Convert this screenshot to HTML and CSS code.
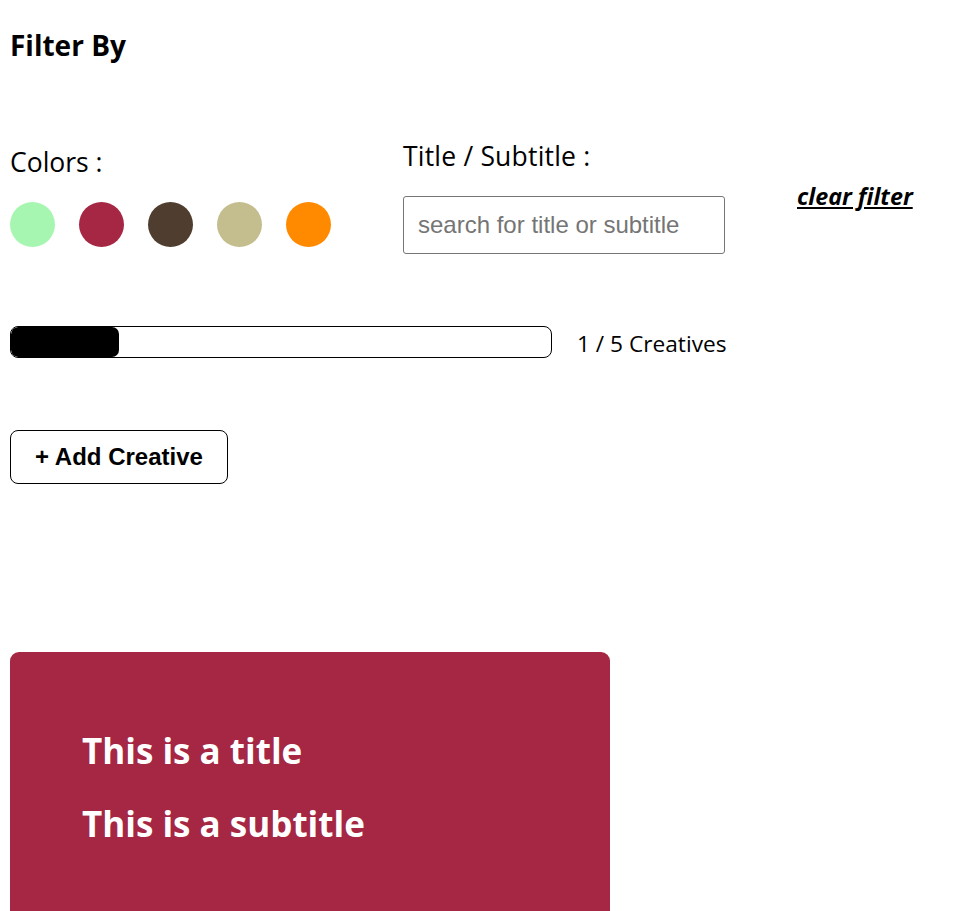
FILE: index.html
```html
<!DOCTYPE html>
<html>
<head>
<meta charset="utf-8">
<link rel="stylesheet" href="styles.css">
</head>
<body>
<div class="page">
  <h2 class="heading">Filter By</h2>
  <div class="filters">
    <div class="colors-col">
      <div class="label colors-label">Colors :</div>
      <div class="swatches">
        <span class="swatch green"></span>
        <span class="swatch crimson"></span>
        <span class="swatch brown"></span>
        <span class="swatch khaki"></span>
        <span class="swatch orange"></span>
      </div>
    </div>
    <div class="title-col">
      <div class="label title-label">Title / Subtitle :</div>
      <input class="search" type="text" placeholder="search for title or subtitle">
    </div>
    <div class="clear-col">
      <a class="clear" href="#">clear filter</a>
    </div>
  </div>
  <div class="progress-row">
    <div class="progress"><div class="progress-fill" style="width:20%"></div></div>
    <span class="count">1 / 5 Creatives</span>
  </div>
  <button class="add-btn">+ Add Creative</button>
  <div class="card">
    <div class="card-title">This is a title</div>
    <div class="card-subtitle">This is a subtitle</div>
  </div>
</div>
</body>
</html>
```
FILE: styles.css
```css
html, body {
  margin: 0;
  padding: 0;
  background: #fff;
}
body {
  font-family: "Open Sans", "Noto Sans", sans-serif;
  color: #000;
  overflow: hidden;
}
.page {
  padding: 0 10px;
}
.heading {
  margin: 0;
  padding-top: 25px;
  font-size: 28px;
  line-height: 40px;
  font-weight: 700;
}
.filters {
  display: flex;
  margin-top: 76px;
}
.label {
  font-size: 26.5px;
  line-height: 30px;
}
.title-label {
  letter-spacing: 0.2px;
}
.colors-col {
  width: 393px;
  padding-top: 6px;
}
.swatches {
  display: flex;
  gap: 24px;
  margin-top: 25px;
}
.swatch {
  width: 45px;
  height: 45px;
  border-radius: 50%;
  display: block;
}
.green { background: #a6f6b1; }
.crimson { background: #a52743; }
.brown { background: #4f3e2f; }
.khaki { background: #c4bd8e; }
.orange { background: #ff8a00; }
.title-col {
  width: 394px;
}
.search {
  display: block;
  box-sizing: border-box;
  margin-top: 25px;
  width: 322px;
  height: 58px;
  border: 1px solid #767676;
  border-radius: 3px;
  padding: 0 14px;
  font-family: "Liberation Sans", Arial, sans-serif;
  font-size: 24px;
  outline: none;
}
.search::placeholder {
  color: #757575;
}
.clear-col {
  padding-top: 39px;
}
.clear {
  color: #000;
  font-weight: 700;
  font-style: italic;
  font-size: 23.3px;
  text-decoration: underline;
}
.progress-row {
  display: flex;
  align-items: flex-start;
  gap: 25px;
  margin-top: 72px;
}
.progress {
  box-sizing: border-box;
  width: 542px;
  height: 32px;
  border: 1px solid #000;
  border-radius: 8px;
  overflow: hidden;
}
.progress-fill {
  height: 100%;
  background: #000;
  border-radius: 7px;
}
.count {
  font-size: 22.7px;
  line-height: 28px;
  margin-top: 4px;
}
.add-btn {
  display: block;
  margin-top: 72px;
  box-sizing: border-box;
  width: 218px;
  height: 54px;
  background: #fff;
  border: 1px solid #000;
  border-radius: 8px;
  font-family: "Liberation Sans", Arial, sans-serif;
  font-weight: 700;
  font-size: 24px;
  color: #000;
  padding: 0;
}
.card {
  margin-top: 168px;
  width: 600px;
  height: 300px;
  box-sizing: border-box;
  background: #a52743;
  border-radius: 9px;
  padding: 74px 0 0 72px;
  color: #fff;
  font-weight: 700;
  font-size: 35px;
}
.card-title {
  line-height: 50px;
}
.card-subtitle {
  line-height: 50px;
  margin-top: 23px;
}
```
